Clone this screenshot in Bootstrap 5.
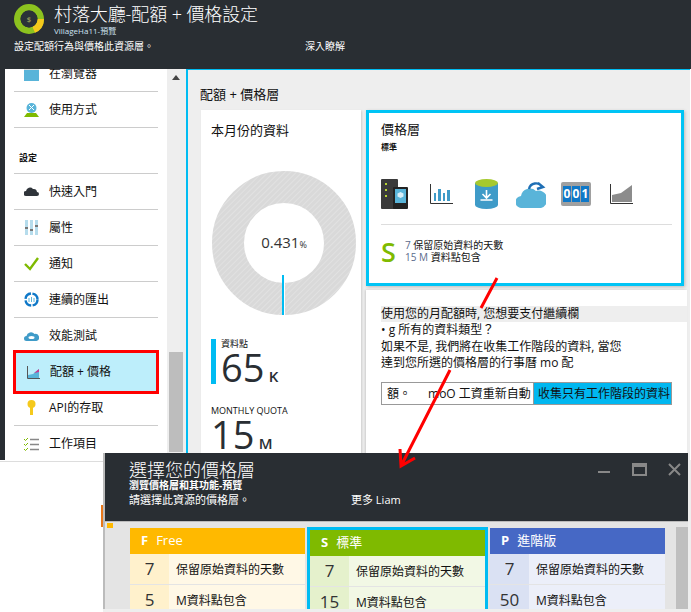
<!DOCTYPE html>
<html lang="zh-Hant">
<head>
    <meta charset="UTF-8">
    <meta name="viewport" content="width=device-width, initial-scale=1.0">
    <title>配額 + 價格設定</title>
    <link href="https://cdn.jsdelivr.net/npm/bootstrap@5.3.0/dist/css/bootstrap.min.css" rel="stylesheet">
    <style>
        body { font-family: "Open Sans", "Noto Sans CJK TC", sans-serif; color: #111; background: #fff; overflow: hidden; }
        .page-wrap { position: relative; width: 691px; height: 612px; overflow: hidden; }
        .top-head { height: 69px; background: #292e33; color: #fff; padding: 2px 0 0 14px; }
        .top-logo { width: 30px; height: 30px; margin: 2px 10px 0 0; }
        .top-title { font-size: 18px; line-height: 24px; font-weight: 300; letter-spacing: -.1px; }
        .top-sub { font-size: 8px; line-height: 10px; color: #cfe3f2; }
        .top-desc { font-size: 10px; line-height: 14px; margin-top: 3px; width: 291px; }
        .top-more { font-size: 10px; line-height: 14px; margin-top: 3px; }
        .work-row { height: 391px; }
        .left-strip { width: 5px; background: #292e33; }
        .side-col { width: 162px; background: #fff; overflow: hidden; padding: 0 9px; }
        .side-list { margin-top: -13px; }
        .side-row { height: 36px; font-size: 12px; padding-left: 10px; border-bottom: 1px solid #ccc; gap: 10px; }
        .side-row svg { width: 15px; height: 15px; flex: none; }
        .side-row.no-line { border-bottom: 0; }
        .side-row.row-above { height: 32px; padding-top: 4px; }
        .side-row.row-below { height: 32px; padding-bottom: 4px; }
        .side-gap { height: 46px; border-bottom: 1px solid #ccc; font-size: 9px; font-weight: 700; padding: 23px 0 0 5px; }
        .side-active { height: 44px; margin: 0 -1px; padding-left: 10px; background: #bdeefb; border: 3px solid #f00; font-size: 12px; gap: 9px; }
        .side-active svg { width: 15px; height: 15px; flex: none; }
        .scroll-col { width: 19px; background: #eee; padding: 0 3px 0 2px; }
        .scroll-up { width: 0; height: 0; margin: 6px auto 0; border: 4px solid transparent; border-top: 0; border-bottom: 5px solid #444; }
        .scroll-thumb { height: 100px; background: #bdbdbd; margin-top: 272px; }
        .main-col { width: 504px; background: #eee; border-left: 2px solid #00bcf2; border-top: 1px solid #00bcf2; padding: 0 4px 0 13px; overflow: hidden; }
        .main-title { font-size: 13px; line-height: 18px; margin-top: 15px; height: 25px; margin-left: -1px; }
        .usage-box { width: 160px; height: 345px; background: #fff; padding: 11px 10px; box-shadow: 1px 1px 2px #ccc; flex: none; }
        .box-head { font-size: 13px; line-height: 18px; }
        .donut { display: block; width: 144px; height: 144px; margin: 32px 0 0 1px; }
        .stat-a { border-left: 5px solid #00bcf2; margin-top: 24px; padding-left: 5px; height: 45px; }
        .stat-label { font-size: 9px; line-height: 10px; }
        .stat-num { font-size: 38px; line-height: 36px; color: #292e33; }
        .stat-unit { font-size: 15px; font-weight: 600; color: #292e33; }
        .stat-b { margin-top: 22px; }
        .right-stack { width: 321px; flex: none; gap: 4px; margin-left: 5px; }
        .tier-box { width: 318px; height: 176px; background: #fff; border: 3px solid #00c4f5; padding: 7px 9px 0 12px; box-shadow: 1px 1px 3px #bbb; }
        .tier-name { font-size: 8px; line-height: 10px; font-weight: 700; margin-top: 4px; }
        .icon-row { margin-top: 26px; height: 31px; gap: 15px; }
        .icon-row svg { display: block; height: 30px; }
        .icon-row .push-a { margin-left: 7px; }
        .icon-row .push-b { margin-left: 3px; }
        .icon-row .push-c { margin-left: 4px; }
        .tier-line { border-top: 1px solid #ddd; margin: 15px 0 14px; }
        .tier-s { font-size: 27px; line-height: 27px; font-weight: 600; color: #7fba00; width: 24px; margin-top: -1px; }
        .tier-txt { font-size: 10px; line-height: 12px; }
        .tier-txt b { font-weight: 400; color: #5b6b8c; }
        .ask-box { background: #fff; height: 170px; padding: 16px 0 0 15px; box-shadow: -1px 0 2px #ccc; }
        .ask-text { font-size: 12px; line-height: 16.3px; }
        .ask-first { background: #eee; }
        .pick-bar { width: 291px; height: 23px; margin-top: 11px; border: 1px solid #999; font-size: 12px; }
        .pick-left { width: 151px; padding-left: 5px; background: #fff; white-space: nowrap; }
        .pick-left span { margin-right: 17px; }
        .pick-right { flex: 1; background: #00b7f0; padding-left: 4px; border-left: 1px solid #999; white-space: nowrap; }
        .low-area { height: 152px; }
        .low-left { width: 103px; border-top: 1px solid #ddd; margin-top: 1px; }
        .low-right { flex: 1; background: #eee; }
        .blade-wrap { position: absolute; left: 103px; top: 453px; width: 585px; height: 156px; background: #e4e4e4; border-left: 2px solid #bbb; overflow: hidden; }
        .blade-head { height: 69px; background: #292e33; color: #fff; padding: 8px 0 0 26px; margin-left: -2px; border-bottom: 1px solid #bbb; position: relative; }
        .blade-title { font-size: 18px; line-height: 19px; font-weight: 300; }
        .blade-sub { font-size: 10px; line-height: 11px; font-weight: 700; }
        .blade-desc { font-size: 11px; line-height: 15px; margin-top: 1px; width: 222px; }
        .blade-more { font-size: 11px; line-height: 15px; margin-top: 1px; }
        .win-btns { position: absolute; right: 7px; top: 10px; gap: 21px; }
        .orange-tick { position: absolute; left: 101px; top: 505px; width: 2px; height: 22px; background: #e8771a; }
        .orange-chip { position: absolute; left: 107px; top: 523px; width: 6px; height: 5px; background: #ffb900; }
        .plan-row { padding: 6px 0 0 25px; }
        .plan-scroll { width: 12px; height: 90px; background: #bfbfbf; margin: -1px 0 0 auto; }
        .plan-col { width: 175px; flex: none; }
        .plan-mid { width: 181px; border: 3px solid #00bcf2; border-bottom: 0; margin: -1px 2px 0 2px; flex: none; }
        .plan-head { height: 26px; color: #fff; font-size: 13px; padding-left: 11px; gap: 8px; }
        .plan-head b { font-weight: 700; }
        .plan-body { height: 30px; margin-bottom: 1px; font-size: 12px; }
        .plan-num { width: 39px; height: 100%; font-size: 17px; color: #333; }
        .plan-lbl { padding-left: 7px; padding-top: 1px; }
        .p-free .plan-head { background: #ffb900; }
        .p-free .plan-body { background: #fff8e6; }
        .p-free .plan-num { background: #fff1cc; }
        .p-std .plan-head { background: #7fba00; }
        .p-std .plan-body { background: #f2f8e5; }
        .p-std .plan-num { background: #e5f1cc; }
        .p-pro .plan-head { background: #4668c5; }
        .p-pro .plan-body { background: #eceff9; }
        .p-pro .plan-num { background: #dae1f3; }
        .arrow-svg { position: absolute; left: 0; top: 0; pointer-events: none; }
    </style>
</head>

<body>
    <div class="page-wrap">

        <!-- Header -->
        <div class="top-head">
            <div class="d-flex">
                <svg class="top-logo" viewBox="0 0 32 32">
                    <circle cx="16" cy="16" r="12.500" fill="none" stroke="#8cc21f" stroke-width="7"/>
                    <path d="M28.500 16A12.500 12.500 0 0 1 21 27.500" fill="none" stroke="#f5c91c" stroke-width="7"/>
                    <circle cx="16" cy="16" r="9" fill="#2b3238"/>
                    <text x="16" y="19" font-size="8" font-weight="700" text-anchor="middle" fill="#8a8f55">$</text>
                </svg>
                <div>
                    <div class="top-title">村落大廳-配額 + 價格設定</div>
                    <div class="top-sub">VillageHa11-預覽</div>
                </div>
            </div>
            <div class="d-flex">
                <div class="top-desc">設定配額行為與價格此資源層。</div>
                <div class="top-more">深入瞭解</div>
            </div>
        </div>

        <div class="d-flex work-row">
            <div class="left-strip"></div>

            <!-- Sidebar -->
            <div class="side-col">
                <div class="side-list">
                    <div class="side-row d-flex align-items-center">
                        <svg viewBox="0 0 15 15"><rect width="15" height="15" fill="#59b4d9"/><rect width="15" height="4" fill="#d8d8d8"/></svg>
                        <span>在瀏覽器</span>
                    </div>
                    <div class="side-row d-flex align-items-center">
                        <svg viewBox="0 0 15 15"><circle cx="7.500" cy="6" r="5" fill="#59b4d9"/><path d="M5 3l5 5M10 3L5 8" stroke="#fff"/><path d="M0 15l3-4h9l3 4z" fill="#7fba00"/></svg>
                        <span>使用方式</span>
                    </div>
                    <div class="side-gap">設定</div>
                    <div class="side-row d-flex align-items-center">
                        <svg viewBox="0 0 15 15"><path d="M2 12a2.500 2.500 0 0 1 0-5 4 4 0 0 1 7-2 3.500 3.500 0 0 1 4 3 2 2 0 0 1 0 4z" fill="#2f343a"/></svg>
                        <span>快速入門</span>
                    </div>
                    <div class="side-row d-flex align-items-center">
                        <svg viewBox="0 0 15 15"><path d="M1 0h3v15H1zM6 0h3v15H6zM11 0h3v15h-3z" fill="#b6dcec"/><path d="M1 7h3v2H1zM6 9h3v2H6zM11 5h3v2h-3z" fill="#777"/></svg>
                        <span>屬性</span>
                    </div>
                    <div class="side-row d-flex align-items-center">
                        <svg viewBox="0 0 15 15"><path d="M1 8l5 5 8-11" fill="none" stroke="#7fba00" stroke-width="2.400"/></svg>
                        <span>通知</span>
                    </div>
                    <div class="side-row d-flex align-items-center">
                        <svg viewBox="0 0 15 15"><circle cx="7.500" cy="7.500" r="6" fill="none" stroke="#0f78c8" stroke-width="2.400" stroke-dasharray="8 1.500"/><path d="M5 6v4M7.500 5v5M10 6v4" stroke="#59b4d9"/></svg>
                        <span>連續的匯出</span>
                    </div>
                    <div class="side-row row-above no-line d-flex align-items-center">
                        <svg viewBox="0 0 15 15"><path d="M2.500 12a2.500 2.500 0 0 1 0-5 4.500 4.500 0 0 1 8-2 3.500 3.500 0 0 1 2 7z" fill="#3f9bc8"/><ellipse cx="7.500" cy="8.500" rx="3" ry="1.500" fill="#fff"/></svg>
                        <span>效能測試</span>
                    </div>
                    <div class="side-active d-flex align-items-center">
                        <svg viewBox="0 0 15 15"><path d="M1.500 1v12.500H14" fill="none" stroke="#555"/><path d="M2 13V10l5-1 6-5v9z" fill="#59b4d9"/><path d="M8 8l5-4v3z" fill="#c8388f"/></svg>
                        <span>配額 + 價格</span>
                    </div>
                    <div class="side-row row-below d-flex align-items-center">
                        <svg viewBox="0 0 15 15"><circle cx="7.500" cy="4" r="4" fill="#f5c91c"/><path d="M6 7h3v8H6z" fill="#f5c91c"/></svg>
                        <span>API的存取</span>
                    </div>
                    <div class="side-row no-line d-flex align-items-center">
                        <svg viewBox="0 0 15 15"><path d="M6 2.500h9M6 7.500h9M6 12.500h9" stroke="#888" stroke-width="1.600"/><path d="M0 2l1.500 1.500L4 1M0 7l1.500 1.500L4 6M0 12l1.500 1.500L4 11" fill="none" stroke="#7fba00"/></svg>
                        <span>工作項目</span>
                    </div>
                </div>
            </div>

            <div class="scroll-col">
                <div class="scroll-up"></div>
                <div class="scroll-thumb"></div>
            </div>

            <!-- Main -->
            <div class="main-col">
                <div class="main-title">配額 + 價格層</div>
                <div class="d-flex">
                    <div class="usage-box">
                        <div class="box-head">本月份的資料</div>
                        <svg class="donut" viewBox="0 0 144 144">
                            <defs>
                                <pattern id="hatch" width="4" height="4" patternUnits="userSpaceOnUse" patternTransform="rotate(-45)">
                                    <rect width="4" height="4" fill="#d9d9d9"/>
                                    <rect width="4" height="1" fill="#e1e1e1"/>
                                </pattern>
                            </defs>
                            <circle cx="72" cy="72" r="56" fill="none" stroke="url(#hatch)" stroke-width="32"/>
                            <rect x="70" y="104" width="2" height="40" fill="#00bcf2"/>
                            <rect x="72" y="112" width="1" height="32" fill="#fff"/>
                            <text x="72" y="77" font-size="15" text-anchor="middle" fill="#333" font-family="Open Sans">0.431<tspan font-size="9">%</tspan></text>
                        </svg>
                        <div class="stat-a">
                            <div class="stat-label">資料點</div>
                            <div><span class="stat-num">65</span> <span class="stat-unit">K</span></div>
                        </div>
                        <div class="stat-b">
                            <div class="stat-label">MONTHLY QUOTA</div>
                            <div><span class="stat-num">15</span> <span class="stat-unit">M</span></div>
                        </div>
                    </div>

                    <div class="right-stack d-flex flex-column">
                        <div class="tier-box">
                            <div class="box-head">價格層</div>
                            <div class="tier-name">標準</div>
                            <div class="icon-row d-flex align-items-center">
                                <svg viewBox="0 0 27 30" width="27"><rect width="17" height="30" rx="1" fill="#3a3a3a"/><path d="M4 4h2v2H4zM4 10h2v2H4zM4 16h2v2H4z" fill="#b8d432"/><rect x="12" y="8" width="15" height="22" rx="1" fill="#222"/><rect x="14" y="10" width="11" height="14" fill="#59b4d9"/><path d="M19.500 13l3 1.500v3l-3 1.500-3-1.500v-3z" fill="#d8eef8"/></svg>
                                <svg class="push-a" viewBox="0 0 23 20" width="23" style="height:20px"><path d="M.500 0v19.500H23" fill="none" stroke="#333"/><path d="M4 9h2v8H4zM8 5h3v12H8zM13 9h2v8h-2zM17 6h3v11h-3z" fill="#3f9bc8"/></svg>
                                <svg class="push-a" viewBox="0 0 23 30" width="23"><path d="M0 4h23v22a11.500 4 0 0 1-23 0z" fill="#3f9bc8"/><ellipse cx="11.500" cy="4" rx="11.500" ry="4" fill="#a6c92f"/><path d="M11.500 11v8M7.500 15l4 4 4-4M5.500 21h12" fill="none" stroke="#fff" stroke-width="1.600"/></svg>
                                <svg class="push-b" viewBox="0 0 30 28" width="30" style="height:28px"><path d="M6 28a6 6 0 0 1-1-12 9 9 0 0 1 15-5 7 7 0 0 1 5 17z" fill="#59b4d9"/><path d="M13 9a7 7 0 0 1 13-2M22 3l5 4-6 2" fill="none" stroke="#1f6fb5" stroke-width="2.400"/></svg>
                                <svg viewBox="0 0 30 24" width="30" style="height:24px"><rect width="30" height="24" rx="2" fill="#a0a0a0"/><rect x="2" y="4" width="8" height="16" fill="#0f78c8"/><rect x="11" y="4" width="8" height="16" fill="#0f78c8"/><rect x="20" y="4" width="8" height="16" fill="#0f78c8"/><g fill="#fff" font-size="12" font-weight="700" text-anchor="middle" font-family="Open Sans"><text x="6" y="16">0</text><text x="15" y="16">0</text><text x="24" y="16">1</text></g></svg>
                                <svg class="push-c" viewBox="0 0 23 20" width="23" style="height:20px"><path d="M.500 0v19.500H23" fill="none" stroke="#333"/><path d="M2 18v-7l9-2 11-8v17z" fill="#8c8c8c"/></svg>
                            </div>
                            <div class="tier-line"></div>
                            <div class="d-flex">
                                <div class="tier-s">S</div>
                                <div class="tier-txt">
                                    <div><b>7</b> 保留原始資料的天數</div>
                                    <div><b>15 M</b> 資料點包含</div>
                                </div>
                            </div>
                        </div>
                        <div class="ask-box">
                            <div class="ask-text">
                                <div class="ask-first">使用您的月配額時, 您想要支付繼續欄</div>
                                <div>• g 所有的資料類型？</div>
                                <div>如果不是, 我們將在收集工作階段的資料, 當您</div>
                                <div>達到您所選的價格層的行事曆 mo 配</div>
                            </div>
                            <div class="pick-bar d-flex">
                                <div class="pick-left d-flex align-items-center"><span>額。</span>moO 工資重新自動</div>
                                <div class="pick-right d-flex align-items-center">收集只有工作階段的資料</div>
                            </div>
                        </div>
                    </div>
                </div>
            </div>
        </div>
        <div class="low-area d-flex">
            <div class="low-left"></div>
            <div class="low-right"></div>
        </div>

        <!-- Pricing blade -->
        <div class="orange-tick"></div>
        <div class="blade-wrap">
            <div class="blade-head">
                <div class="blade-title">選擇您的價格層</div>
                <div class="blade-sub">瀏覽價格層和其功能-預覽</div>
                <div class="d-flex">
                    <div class="blade-desc">請選擇此資源的價格層。</div>
                    <div class="blade-more">更多 Liam</div>
                </div>
                <div class="win-btns d-flex align-items-center">
                    <svg width="13" height="13" viewBox="0 0 13 13"><rect y="8" width="12" height="2" fill="#888"/></svg>
                    <svg width="15" height="13" viewBox="0 0 15 13"><rect x="1" y="1" width="13" height="11" fill="none" stroke="#888" stroke-width="2"/><rect x="1" y="1" width="13" height="3" fill="#888"/></svg>
                    <svg width="13" height="13" viewBox="0 0 13 13"><path d="M1 1l11 11M12 1L1 12" stroke="#888" stroke-width="2"/></svg>
                </div>
            </div>
            <div class="plan-row d-flex">
                <div class="plan-col p-free">
                    <div class="plan-head d-flex align-items-center"><b>F</b><span>Free</span></div>
                    <div class="plan-body d-flex align-items-center"><div class="plan-num d-flex align-items-center justify-content-center">7</div><div class="plan-lbl">保留原始資料的天數</div></div>
                    <div class="plan-body d-flex align-items-center"><div class="plan-num d-flex align-items-center justify-content-center">5</div><div class="plan-lbl">M資料點包含</div></div>
                </div>
                <div class="plan-mid p-std">
                    <div class="plan-head d-flex align-items-center"><b>S</b><span>標準</span></div>
                    <div class="plan-body d-flex align-items-center"><div class="plan-num d-flex align-items-center justify-content-center">7</div><div class="plan-lbl">保留原始資料的天數</div></div>
                    <div class="plan-body d-flex align-items-center"><div class="plan-num d-flex align-items-center justify-content-center">15</div><div class="plan-lbl">M資料點包含</div></div>
                </div>
                <div class="plan-col p-pro">
                    <div class="plan-head d-flex align-items-center"><b>P</b><span>進階版</span></div>
                    <div class="plan-body d-flex align-items-center"><div class="plan-num d-flex align-items-center justify-content-center">7</div><div class="plan-lbl">保留原始資料的天數</div></div>
                    <div class="plan-body d-flex align-items-center"><div class="plan-num d-flex align-items-center justify-content-center">50</div><div class="plan-lbl">M資料點包含</div></div>
                </div>
                <div class="plan-scroll"></div>
            </div>
        </div>
        <div class="orange-chip"></div>

        <!-- Red arrow -->
        <svg class="arrow-svg" width="691" height="612" viewBox="0 0 691 612">
            <path d="M497 278L481 308M450 370L401 466M415 458L401 466L400 449" fill="none" stroke="#f00" stroke-width="3"/>
        </svg>
    </div>

    <script src="https://cdn.jsdelivr.net/npm/bootstrap@5.3.0/dist/js/bootstrap.bundle.min.js"></script>
</body>
</html>
